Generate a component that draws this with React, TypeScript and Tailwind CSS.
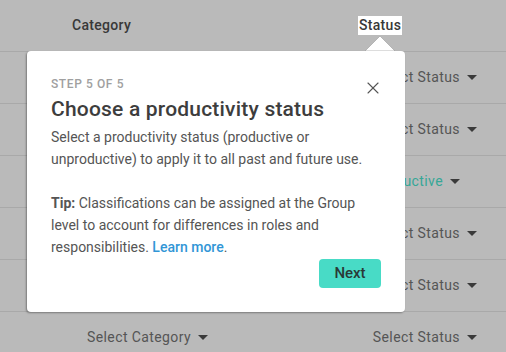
import { X } from 'lucide-react'

const ROWS = [
  { status: 'Select Status', active: false },
  { status: 'Select Status', active: false },
  { status: 'Productive', active: true },
  { status: 'Select Status', active: false },
  { status: 'Select Status', active: false },
  { status: 'Select Status', active: false },
]

function Caret() {
  return (
    <span className="ml-[7px] inline-block h-0 w-0 border-x-[5px] border-t-[5px] border-x-transparent border-t-[#3a3a3a]" />
  )
}

export default function App() {
  return (
    <div
      className="relative h-[352px] w-[506px] overflow-hidden bg-[#bababa] text-[#555]"
      style={{ fontFamily: 'Roboto, "Liberation Sans", sans-serif' }}
    >
      {/* table under the overlay */}
      <div className="flex h-[52px] items-center border-b border-[#a9a9a9] text-[14px] font-medium tracking-[0.3px] text-[#383838]">
        <div className="w-[358px] pl-[72px]">Category</div>
        <div className="bg-white px-[1px] leading-[19px]">Status</div>
      </div>
      {ROWS.map((row, i) => (
        <div
          key={i}
          className="flex h-[52px] items-center justify-between border-b border-[#a9a9a9] text-[14px] tracking-[0.4px]"
        >
          <div className="flex items-center pl-[87px]">
            Select Category
            <Caret />
          </div>
          <div className={`flex items-center ${row.active ? 'pr-[46px]' : 'pr-[29px]'}`}>
            <span className={row.active ? 'text-[#36a797]' : ''}>{row.status}</span>
            <Caret />
          </div>
        </div>
      ))}

      {/* tour popover */}
      <div className="absolute left-[27px] top-[51px] w-[378px]">
        <svg
          className="absolute left-[337px] top-[-16px]"
          width="32"
          height="17"
          viewBox="0 0 32 17"
        >
          <polygon points="1,16 16,1 31,16" fill="white" stroke="#9a9a9a" strokeWidth="0.6" />
        </svg>
        <div className="relative rounded-[4px] bg-white px-[24px] pb-[24px] pt-[25px] shadow-[-1px_1px_2px_rgba(0,0,0,0.35)]">
          <button className="absolute right-[22px] top-[27px] text-[#555]">
            <X size={20} strokeWidth={1.3} />
          </button>
          <div className="text-[12px] font-medium leading-[16px] tracking-[0.6px] text-[#a0a0a0]">
            STEP 5 OF 5
          </div>
          <div className="mt-[3px] text-[21px] font-medium leading-[28px] tracking-[0.2px] text-[#3d3d3d]">
            Choose a productivity status
          </div>
          <p className="mt-[3px] text-[14px] leading-[22px] text-[#555]">
            Select a productivity status (productive or unproductive) to apply it to all past and future use.
          </p>
          <p className="mt-[22px] text-[14px] leading-[22px] text-[#555]">
            <span className="font-bold">Tip:</span> Classifications can be assigned at the Group level to account
            for differences in roles and responsibilities.{' '}
            <span className="font-medium text-[#3196d6]">Learn more</span>.
          </p>
          <div className="mt-[1px] flex justify-end">
            <button className="h-[29px] w-[62px] rounded-[4px] bg-[#48dbc6] text-[15px] font-medium text-[#2a3a37]">
              Next
            </button>
          </div>
        </div>
      </div>
    </div>
  )
}
